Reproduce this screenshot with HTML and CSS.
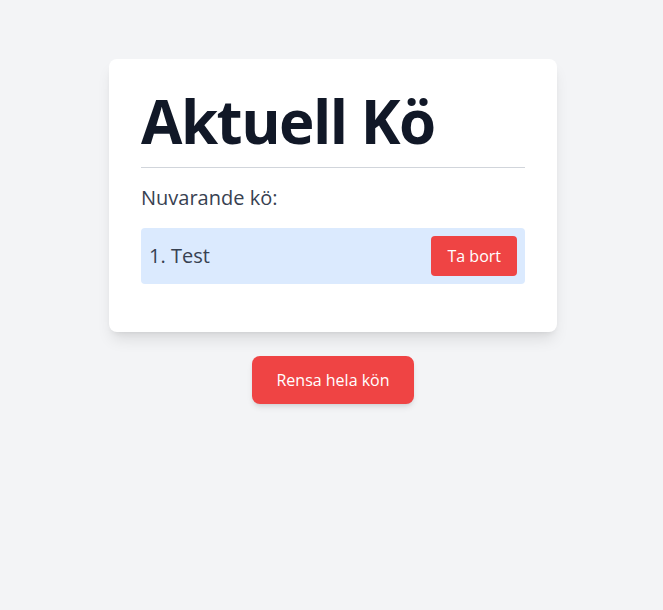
FILE: index.html
```html
<!DOCTYPE html>
<html lang="sv">
<head>
<meta charset="utf-8">
<title>Aktuell Kö</title>
<link rel="stylesheet" href="styles.css">
</head>
<body>
<main class="page">
  <section class="card">
    <h1 class="title">Aktuell Kö</h1>
    <h2 class="subtitle">Nuvarande kö:</h2>
    <ul class="queue">
      <li class="queue-item">
        <span class="queue-name">1. Test</span>
        <button class="btn btn-small">Ta bort</button>
      </li>
    </ul>
  </section>
  <button class="btn btn-large">Rensa hela kön</button>
</main>
</body>
</html>
```

FILE: styles.css
```css
* { box-sizing: border-box; }
html, body { margin: 0; padding: 0; }
body {
  background: #f3f4f6;
  font-family: "Open Sans", "Noto Sans", sans-serif;
  color: #111827;
  min-height: 610px;
}
.page {
  display: flex;
  flex-direction: column;
  align-items: center;
  padding-top: 59px;
  padding-left: 3px;
}
.card {
  width: 448px;
  background: #ffffff;
  border-radius: 8px;
  box-shadow: 0 10px 15px -3px rgba(0,0,0,0.1), 0 4px 6px -4px rgba(0,0,0,0.1);
  padding: 32px 32px 48px;
}
.title {
  margin: 0;
  font-size: 60px;
  line-height: 60px;
  font-weight: 700;
  letter-spacing: -1.5px;
  color: #111827;
  padding-bottom: 16px;
  border-bottom: 1px solid #d1d5db;
}
.subtitle {
  margin: 16px 0 16px;
  font-size: 20px;
  line-height: 28px;
  font-weight: 400;
  color: #374151;
}
.queue {
  list-style: none;
  margin: 0;
  padding: 0;
}
.queue-item {
  display: flex;
  align-items: center;
  justify-content: space-between;
  background: #dbeafe;
  border-radius: 4px;
  padding: 8px;
}
.queue-name {
  font-size: 20px;
  line-height: 28px;
  color: #374151;
}
.btn {
  font-family: inherit;
  border: none;
  background: #ef4444;
  color: #ffffff;
  font-size: 16px;
  line-height: 24px;
  cursor: pointer;
}
.btn-small {
  padding: 8px 16px;
  border-radius: 4px;
}
.btn-large {
  margin-top: 24px;
  padding: 12px 24px;
  border-radius: 8px;
  box-shadow: 0 4px 6px -1px rgba(0,0,0,0.1), 0 2px 4px -2px rgba(0,0,0,0.1);
}
```
